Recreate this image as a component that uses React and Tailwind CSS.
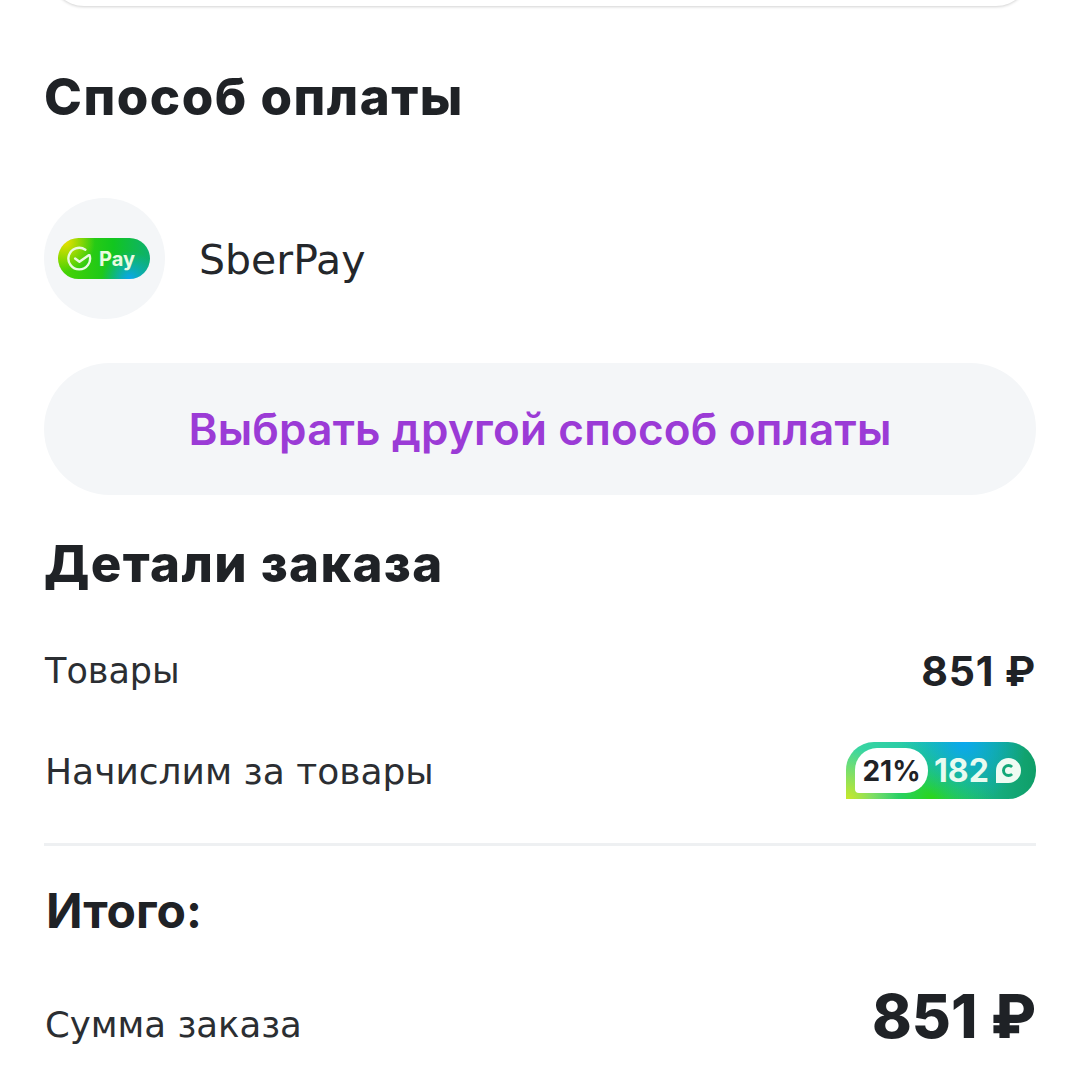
export default function App() {
  const head = { fontFamily: "Inter, 'Noto Sans', sans-serif" };
  return (
    <div className="w-[1080px] h-[1091px] overflow-hidden bg-white font-['DejaVu_Sans',sans-serif] text-[#1f2226]">
      <div className="mx-[50px] -mt-[34px] h-[40px] rounded-b-[34px] bg-white shadow-[0_1px_3px_rgba(0,0,0,0.18)]" />
      <div className="px-[44px]">
        <h2 className="h-[60px] mt-[60px] flex items-center font-['Inter',sans-serif] font-extrabold text-[51px] tracking-[1.5px] leading-none">Способ оплаты</h2>

        <div className="mt-[72px] h-[121px] flex items-center gap-[34px]">
          <div className="w-[121px] h-[121px] rounded-full bg-[#f4f6f8] flex items-center justify-center">
            <div className="-ml-px w-[92px] h-[41px] rounded-full flex items-center pl-[9px] gap-[6px] bg-[radial-gradient(circle_at_8%_10%,#e8e000_0%,rgba(232,224,0,0)_32%),radial-gradient(circle_at_78%_100%,#0aa6ee_0%,rgba(10,166,238,0)_34%),linear-gradient(90deg,#4ed400_0%,#12c61f_60%,#0db070_100%)]">
              <svg width="26" height="26" viewBox="0 0 24 24" fill="none" stroke="#e9fbe0" strokeWidth="2.2" strokeLinecap="round" strokeLinejoin="round">
                <path d="M20.8 8.5A10 10 0 1 1 17 3.4" />
                <path d="M7.5 11.5l4 3 8.5-6" />
              </svg>
              <span style={head} className="text-[20px] font-bold text-[#e9fbe0] leading-none">Pay</span>
            </div>
          </div>
          <span className="pt-[3px] text-[41px] leading-none text-[#24272b]">SberPay</span>
        </div>

        <button className="mt-[44px] w-[992px] h-[132px] rounded-full bg-[#f4f6f8] flex items-center justify-center font-['Inter',sans-serif] font-semibold text-[44px] tracking-[0.2px] text-[#9b3bd6]">
          Выбрать другой способ оплаты
        </button>

        <h2 className="mt-[38px] h-[60px] flex items-center font-['Inter',sans-serif] font-extrabold text-[51px] tracking-[1.4px] leading-none">Детали заказа</h2>

        <div className="mt-[48px] h-[60px] flex items-center justify-between">
          <span className="ml-px text-[35px] leading-none text-[#2b2e32]">Товары</span>
          <span className="font-['Inter',sans-serif] font-bold text-[41px] tracking-[0.8px] leading-none">851 ₽</span>
        </div>

        <div className="mt-[41px] h-[57px] flex items-center justify-between">
          <span className="ml-px pt-[3px] text-[36px] leading-none text-[#2b2e32]">Начислим за товары</span>
          <div className="relative w-[190px] h-[57px] rounded-[28px] rounded-bl-none flex items-center bg-[radial-gradient(circle_at_1%_100%,#c6e82a_0%,rgba(198,232,42,0)_26%),radial-gradient(circle_at_62%_0%,#0aa8ee_0%,rgba(10,168,238,0)_48%),radial-gradient(circle_at_45%_100%,#2ad61a_0%,rgba(42,214,26,0)_52%),linear-gradient(90deg,#3ed8a0_0%,#22c8a8_40%,#0f9e68_100%)]">
            <div className="ml-[9px] w-[73px] h-[45px] bg-white rounded-[22px] rounded-bl-[4px] flex items-center justify-center font-['Inter',sans-serif] font-bold text-[28px] text-[#1f2226] leading-none">21%</div>
            <span className="ml-[6px] font-['Inter',sans-serif] font-bold text-[32px] text-[#e8fbf0] leading-none">182</span>
            <div className="ml-[7px] w-[25px] h-[25px] rounded-full rounded-bl-none bg-[#eefbf2] flex items-center justify-center">
              <div className="w-[13px] h-[13px] rounded-full border-[3px] border-[#12a878] border-r-transparent" />
            </div>
          </div>
        </div>

        <div className="mt-[44px] h-[3px] bg-[#eef0f2]" />

        <div className="ml-[2px] mt-[35px] h-[60px] flex items-center font-['Inter',sans-serif] font-bold text-[48px] leading-none">Итого:</div>

        <div className="mt-[40px] h-[70px] flex items-center justify-between">
          <span className="ml-px text-[35.5px] leading-none text-[#2b2e32] pt-[18px]">Сумма заказа</span>
          <span className="font-['Inter',sans-serif] font-extrabold text-[60px] leading-none">851 ₽</span>
        </div>
      </div>
    </div>
  );
}
